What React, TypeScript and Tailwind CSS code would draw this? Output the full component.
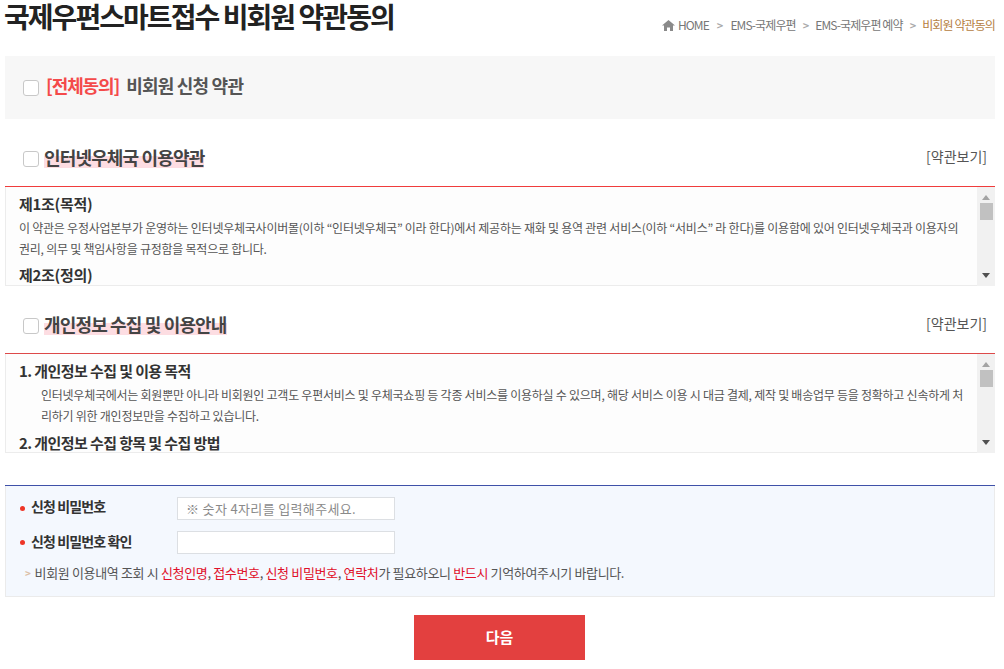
const font = "font-['Noto_Sans_CJK_KR','Noto_Sans',sans-serif]";

function Check() {
  return <span className="block w-4 h-4 shrink-0 bg-white border border-[#c8c8c8] rounded-[3px]" />;
}

function FakeScrollbar() {
  return (
    <div className="w-[18px] shrink-0 bg-[#f1f1f1] flex flex-col items-center justify-between pt-2 pb-2">
      <div className="flex flex-col items-center w-full">
        <svg width="8" height="5" viewBox="0 0 8 5" className="block"><path d="M4 0L8 5H0z" fill="#a3a3a3" /></svg>
        <div className="mt-[3px] w-[13px] h-[17px] bg-[#c1c1c1]" />
      </div>
      <svg width="8" height="5" viewBox="0 0 8 5" className="block"><path d="M0 0H8L4 5z" fill="#505050" /></svg>
    </div>
  );
}

function SectionHead({ title }: { title: string }) {
  return (
    <div className="flex items-center justify-between h-[44px] pl-[18px] pr-2">
      <div className="flex items-center gap-[5px]">
        <Check />
        <span className="mb-[4px] text-[18px] leading-[22px] font-bold tracking-[-0.85px] text-[#444] bg-[linear-gradient(transparent_45%,#fddde2_45%)]">{title}</span>
      </div>
      <a className="mb-[6px] text-[14px] tracking-[0px] text-[#555]">[약관보기]</a>
    </div>
  );
}

function Terms({ border, children }: { border: string; children: React.ReactNode }) {
  return (
    <div className={`h-[100px] flex border-t ${border} border-b-0 bg-[#fdfdfd] shadow-[inset_0_-1px_0_#ececec,inset_1px_0_0_#ececec]`}>
      <div className="flex-1 overflow-hidden pl-[14px] pr-3 pt-[4px]">{children}</div>
      <FakeScrollbar />
    </div>
  );
}

function Field({ label, placeholder, labelClass }: { label: string; placeholder?: string; labelClass: string }) {
  return (
    <div className="flex items-center h-[23px]">
      <span className="w-[5px] h-[5px] rounded-full bg-[#ee3527] ml-[15px] mr-[6px] shrink-0" />
      <span className={`${labelClass} w-[146px] shrink-0 text-[14px] font-bold tracking-[-0.9px] text-[#333]`}>{label}</span>
      <div className="w-[218px] h-[23px] bg-white border border-[#dcdfe3] pl-2 flex items-center text-[13px] tracking-[0.35px] text-[#8a8a8a]">{placeholder}</div>
    </div>
  );
}

export default function App() {
  return (
    <div className={`${font} w-[1004px] h-[669px] overflow-hidden bg-white text-[#444]`}>
      <div className="ml-[5px] w-[990px]">
        <div className="h-[56px] flex items-start justify-between">
          <h1 className="text-[28px] leading-[32px] font-bold tracking-[-1.95px] text-[#222] -ml-[1px]">국제우편스마트접수 비회원 약관동의</h1>
          <div className="flex items-center text-[12px] tracking-[-0.9px] text-[#777] mt-[16px] h-[18px]">
            <svg width="13" height="11" viewBox="0 0 13 11" className="mr-[3px]"><path d="M6.5 0L13 5.6h-2V11H8V7.4H5V11H2V5.6H0z" fill="#8a8a8a" /></svg>
            <span>HOME</span>
            <span className="ml-[8px] mr-[8px] text-[#aaa] text-[11px] font-bold">&gt;</span>
            <span>EMS-국제우편</span>
            <span className="mx-[7px] text-[#aaa] text-[11px] font-bold">&gt;</span>
            <span>EMS-국제우편 예약</span>
            <span className="mx-[7px] text-[#aaa] text-[11px] font-bold">&gt;</span>
            <span className="text-[#b5803f]">비회원 약관동의</span>
          </div>
        </div>

        <div className="h-[63px] bg-[#f7f7f7] flex items-center pl-[18px]">
          <Check />
          <span className="mb-[4px] ml-[7px] text-[18px] font-bold tracking-[-1.1px] text-[#f44a4a]">[전체동의]</span>
          <span className="mb-[4px] ml-[7px] text-[18px] font-bold tracking-[-0.8px] text-[#555]">비회원 신청 약관</span>
        </div>

        <div className="mt-[18px]">
          <SectionHead title="인터넷우체국 이용약관" />
          <div className="h-[5px]" />
          <Terms border="border-[#f03c3c]">
            <div className="text-[15px] leading-[26px] font-bold tracking-[-0.3px] text-[#333]">제1조(목적)</div>
            <p className="text-[12px] leading-[21px] tracking-[-0.24px] text-[#555]">이 약관은 우정사업본부가 운영하는 인터넷우체국사이버몰(이하 “인터넷우체국” 이라 한다)에서 제공하는 재화 및 용역 관련 서비스(이하 “서비스” 라 한다)를 이용함에 있어 인터넷우체국과 이용자의 권리, 의무 및 책임사항을 규정함을 목적으로 합니다.</p>
            <div className="mt-[3px] text-[15px] leading-[26px] font-bold tracking-[-0.3px] text-[#333]">제2조(정의)</div>
          </Terms>
        </div>

        <div className="mt-[18px]">
          <SectionHead title="개인정보 수집 및 이용안내" />
          <div className="h-[5px]" />
          <Terms border="border-[#dd4a4a]">
            <div className="text-[15px] leading-[26px] font-bold tracking-[-0.6px] text-[#333]">1. 개인정보 수집 및 이용 목적</div>
            <p className="pl-[22px] text-[12px] leading-[21px] tracking-[-0.25px] text-[#555]">인터넷우체국에서는 회원뿐만 아니라 비회원인 고객도 우편서비스 및 우체국쇼핑 등 각종 서비스를 이용하실 수 있으며, 해당 서비스 이용 시 대금 결제, 제작 및 배송업무 등을 정확하고 신속하게 처리하기 위한 개인정보만을 수집하고 있습니다.</p>
            <div className="mt-[4px] text-[15px] leading-[26px] font-bold tracking-[-0.6px] text-[#333]">2. 개인정보 수집 항목 및 수집 방법</div>
          </Terms>
        </div>

        <div className="mt-[32px] h-[112px] border-t border-[#3f51a8] bg-[#f4f8fe] shadow-[inset_0_-1px_0_#ebebeb,inset_1px_0_0_#ebebeb,inset_-1px_0_0_#ebebeb] pt-[11px]">
          <Field label="신청 비밀번호" placeholder="※ 숫자 4자리를 입력해주세요." labelClass="mb-[5px]" />
          <div className="h-[11px]" />
          <Field label="신청 비밀번호 확인" labelClass="mb-[3px]" />
          <div className="mt-[9px] flex items-center pl-[20px] text-[13px] tracking-[-0.35px] text-[#555]">
            <span className="text-[#dcc0a6] text-[10px] font-bold mr-[4px]">&gt;</span>
            <span>비회원 이용내역 조회 시 <span className="text-[#e0102a]">신청인명</span>, <span className="text-[#e0102a]">접수번호</span>, <span className="text-[#e0102a]">신청 비밀번호</span>, <span className="text-[#e0102a]">연락처</span>가 필요하오니 <span className="text-[#e0102a]">반드시</span> 기억하여주시기 바랍니다.</span>
          </div>
        </div>

        <div className="mt-[18px] flex justify-center pr-[1px]">
          <button className="w-[171px] h-[45px] bg-[#e3403f] text-white text-[15px] font-bold">다음</button>
        </div>
      </div>
    </div>
  );
}
